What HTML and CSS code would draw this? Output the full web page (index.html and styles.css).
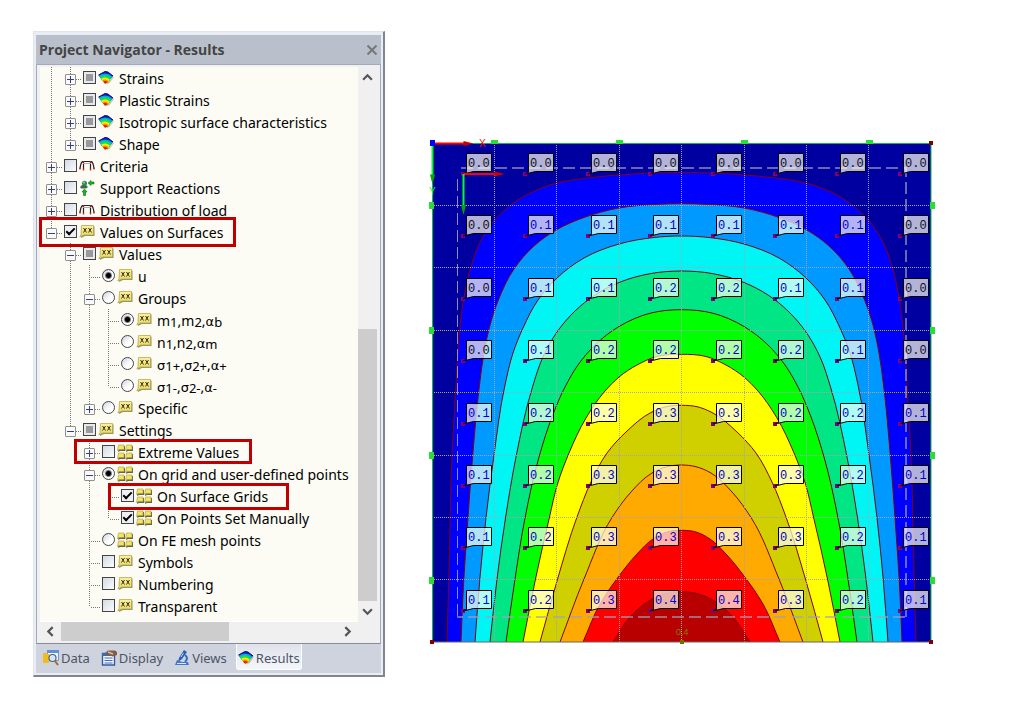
FILE: index.html
```html
<!DOCTYPE html>
<html lang="en">
<head>
<meta charset="utf-8">
<title>Project Navigator - Results</title>
<link rel="stylesheet" href="styles.css">
</head>
<body>
<svg class="sprite" aria-hidden="true">
  <defs>
    <clipPath id="fan"><path d="M.5 5 7 1.500 10 2 15 6 12.500 8.500 10.500 12 7 13.500 4 10Z"/></clipPath>
    <linearGradient id="note" x1="0" y1="0" x2="0" y2="1"><stop offset="0" stop-color="#fdf0a0"/><stop offset="1" stop-color="#e3d660"/></linearGradient>
  </defs>
  <symbol id="i-surface" viewBox="0 0 16 16">
    <path d="M2 6.500 9 14.500 12 12.500 16 7 11 3Z" fill="#777" opacity=".4"/>
    <g clip-path="url(#fan)">
      <rect width="16" height="16" fill="#1018c8"/>
      <circle cx="7" cy="14" r="10.500" fill="#08a0f0"/>
      <circle cx="7" cy="14" r="9" fill="#10e050"/>
      <circle cx="7" cy="14" r="6.500" fill="#f6f000"/>
      <circle cx="7" cy="14" r="4.500" fill="#ff9000"/>
      <circle cx="7" cy="14" r="3" fill="#f01010"/>
    </g>
    <path d="M.5 5 7 1.500 10 2 15 6" fill="none" stroke="#101070"/>
  </symbol>
  <symbol id="i-load" viewBox="0 0 16 16">
    <path d="M1 11Q1.500 5 3.500 3.500H12.500Q14.500 5 15 11" fill="none" stroke="#222" stroke-width="1.200"/>
    <path d="M4.500 12V4M11.500 12V4" fill="none" stroke="#222" stroke-width="1.200"/>
    <path d="M4 5.500H12" stroke="#aaa"/>
    <path d="M1 11.500V9.500M15 11.500V9.500M3 4.500 5 3.500M13 4.500 11 3.500M4.500 12.500V10.500M11.500 12.500V10.500" stroke="#d82020" fill="none" stroke-width="1.300"/>
  </symbol>
  <symbol id="i-support" viewBox="0 0 16 16">
    <path d="M1 7 3 5H7L9 7 7 8.500H2Z" fill="#3c6c50"/>
    <circle cx="5.500" cy="3.200" r="2.500" fill="#2e8a55"/><circle cx="5" cy="2.500" r=".9" fill="#98d8b0"/>
    <path d="M9 3 12 .5V2H15V4H12V5.500ZM5.500 9 8 12H6.500V15.500H4.500V12H3Z" fill="#10b818" stroke="#166a20" stroke-width=".6"/>
  </symbol>
  <symbol id="i-note" viewBox="0 0 16 16">
    <path d="M3 2.500H15.500V12H6L2 14Z" fill="#77775c" opacity=".8"/>
    <path d="M2.500 1.500H14.500V11H5L.8 13 2 10.500Z" fill="url(#note)" stroke="#b2a040" stroke-width=".7"/>
    <path d="M4.500 4 7.500 8.500M7.500 4 4.500 8.500M9.500 4 12.500 8.500M12.500 4 9.500 8.500" stroke="#343010" stroke-width="1"/>
  </symbol>
  <symbol id="i-grid" viewBox="0 0 16 16">
    <g fill="#66644e"><path d="M2 2H8V7H3L1 8ZM10 2H16V7H11L9 8ZM2 10H8V15H3L1 16ZM10 10H16V15H11L9 16Z"/></g>
    <g fill="#f3e467" stroke="#a99a38" stroke-width=".6"><path d="M1.500 1H7V5.500H2L.5 6.500ZM9.500 1H15V5.500H10L8.500 6.500ZM1.500 9H7V13.500H2L.5 14.500ZM9.500 9H15V13.500H10L8.500 14.500Z"/></g>
  </symbol>
  <symbol id="i-data" viewBox="0 0 16 16">
    <path d="M4.500 .5H15.500V10.500H4.500Z" fill="#eef4fc" stroke="#6c94d4"/><path d="M4 0H16V3H4Z" fill="#5f90dc"/>
    <path d="M0 3H4L5 4H6V13H0Z" fill="#f0bd20"/>
    <circle cx="9.500" cy="8" r="3.500" fill="#d2e8fa" stroke="#50627a" stroke-width="1.200"/>
    <path d="M12 11 15 15" stroke="#a66c24" stroke-width="2"/>
  </symbol>
  <symbol id="i-display" viewBox="0 0 16 16">
    <path d="M1.500 3.500H13.500V15H1.500Z" fill="#f2f6fd" stroke="#33599d" stroke-width="1.400"/><path d="M1 3H9V6H1Z" fill="#3969b8"/>
    <path d="M3.500 8H11.500M3.500 10.500H11.500M3.500 13H11.500" stroke="#3e6dbd"/>
    <path d="M4 3 7 .5H14L16 2V5L12 6.500 6 5Z" fill="#7d5d48"/><path d="M7 2 12 4" stroke="#e1b990" stroke-width="1.500"/>
  </symbol>
  <symbol id="i-views" viewBox="0 0 16 16">
    <path d="M10 0 13 2 8 9 4 12 5 8Z" fill="#2860b8"/><path d="M11 5Q15 8 11 12" fill="none" stroke="#3269b8" stroke-width="2"/>
    <path d="M3 10 8 12H14L15 15H1Z" fill="#4477c8"/><path d="M3 13.500H12" stroke="#dce8fa"/><path d="M9.500 3 7 7" stroke="#b9d2f5"/>
  </symbol>
</svg>

<main class="workspace">
  <section class="panel" aria-label="Project Navigator">
    <header class="panel-title">
      <h1>Project Navigator - Results</h1>
      <button class="close" aria-label="Close"><svg viewBox="0 0 10 10"><path d="M.5 .5 9.500 9.500M9.500 .5 .5 9.500"/></svg></button>
    </header>
    <div class="view">
      <div class="tree-pane">
        <ul class="tree">
          <li>
            <ul>
              <li><div class="row"><button class="exp plus" aria-label="Expand"></button><input type="checkbox" class="mixed" id="c1"><svg><use href="#i-surface"/></svg><label for="c1">Strains</label></div></li>
              <li><div class="row"><button class="exp plus" aria-label="Expand"></button><input type="checkbox" class="mixed" id="c2"><svg><use href="#i-surface"/></svg><label for="c2">Plastic Strains</label></div></li>
              <li><div class="row"><button class="exp plus" aria-label="Expand"></button><input type="checkbox" class="mixed" id="c3"><svg><use href="#i-surface"/></svg><label for="c3">Isotropic surface characteristics</label></div></li>
              <li><div class="row"><button class="exp plus" aria-label="Expand"></button><input type="checkbox" class="mixed" id="c4"><svg><use href="#i-surface"/></svg><label for="c4">Shape</label></div></li>
            </ul>
          </li>
          <li><div class="row"><button class="exp plus" aria-label="Expand"></button><input type="checkbox" id="c5"><svg><use href="#i-load"/></svg><label for="c5">Criteria</label></div></li>
          <li><div class="row"><button class="exp plus" aria-label="Expand"></button><input type="checkbox" id="c6"><svg><use href="#i-support"/></svg><label for="c6">Support Reactions</label></div></li>
          <li><div class="row"><button class="exp plus" aria-label="Expand"></button><input type="checkbox" id="c7"><svg><use href="#i-load"/></svg><label for="c7">Distribution of load</label></div></li>
          <li><div class="row mark mark-values"><button class="exp" aria-label="Collapse"></button><input type="checkbox" id="c8" checked><svg><use href="#i-note"/></svg><label for="c8">Values on Surfaces</label></div>
            <ul>
              <li><div class="row"><button class="exp" aria-label="Collapse"></button><input type="checkbox" class="mixed" id="c9"><svg><use href="#i-note"/></svg><label for="c9">Values</label></div>
                <ul>
                  <li><div class="row leaf"><input type="radio" name="value" id="r1" checked><svg><use href="#i-note"/></svg><label for="r1">u</label></div></li>
                  <li><div class="row"><button class="exp" aria-label="Collapse"></button><input type="radio" name="value" id="r2"><svg><use href="#i-note"/></svg><label for="r2">Groups</label></div>
                    <ul>
                      <li><div class="row leaf"><input type="radio" name="group" id="g1" checked><svg><use href="#i-note"/></svg><label for="g1">m<span class="low">1</span>,m<span class="low">2</span>,<span class="greek">α</span><span class="low">b</span></label></div></li>
                      <li><div class="row leaf"><input type="radio" name="group" id="g2"><svg><use href="#i-note"/></svg><label for="g2">n<span class="low">1</span>,n<span class="low">2</span>,<span class="greek">α</span><span class="low">m</span></label></div></li>
                      <li><div class="row leaf"><input type="radio" name="group" id="g3"><svg><use href="#i-note"/></svg><label for="g3"><span class="greek">σ</span><span class="low">1+</span>,<span class="greek">σ</span><span class="low">2+</span>,<span class="greek">α</span><span class="low">+</span></label></div></li>
                      <li><div class="row leaf"><input type="radio" name="group" id="g4"><svg><use href="#i-note"/></svg><label for="g4"><span class="greek">σ</span><span class="low">1-</span>,<span class="greek">σ</span><span class="low">2-</span>,<span class="greek">α</span><span class="low">-</span></label></div></li>
                    </ul>
                  </li>
                  <li><div class="row"><button class="exp plus" aria-label="Expand"></button><input type="radio" name="value" id="r3"><svg><use href="#i-note"/></svg><label for="r3">Specific</label></div></li>
                </ul>
              </li>
              <li><div class="row"><button class="exp" aria-label="Collapse"></button><input type="checkbox" class="mixed" id="c10"><svg><use href="#i-note"/></svg><label for="c10">Settings</label></div>
                <ul>
                  <li><div class="row mark mark-extreme"><button class="exp plus" aria-label="Expand"></button><input type="checkbox" id="c11"><svg><use href="#i-grid"/></svg><label for="c11">Extreme Values</label></div></li>
                  <li><div class="row"><button class="exp" aria-label="Collapse"></button><input type="radio" name="points" id="p1" checked><svg><use href="#i-grid"/></svg><label for="p1">On grid and user-defined points</label></div>
                    <ul>
                      <li><div class="row leaf mark mark-grids"><input type="checkbox" id="c12" checked><svg><use href="#i-grid"/></svg><label for="c12">On Surface Grids</label></div></li>
                      <li><div class="row leaf"><input type="checkbox" id="c13" checked><svg><use href="#i-grid"/></svg><label for="c13">On Points Set Manually</label></div></li>
                    </ul>
                  </li>
                  <li><div class="row leaf"><input type="radio" name="points" id="p2"><svg><use href="#i-grid"/></svg><label for="p2">On FE mesh points</label></div></li>
                  <li><div class="row leaf"><input type="checkbox" id="c14"><svg><use href="#i-note"/></svg><label for="c14">Symbols</label></div></li>
                  <li><div class="row leaf"><input type="checkbox" id="c15"><svg><use href="#i-note"/></svg><label for="c15">Numbering</label></div></li>
                  <li><div class="row leaf"><input type="checkbox" id="c16"><svg><use href="#i-note"/></svg><label for="c16">Transparent</label></div></li>
                </ul>
              </li>
            </ul>
          </li>
        </ul>
      </div>
      <div class="vbar">
        <button class="arrow" aria-label="Scroll up"><svg viewBox="0 0 10 10"><path d="M1 7 5 3 9 7"/></svg></button>
        <div class="track"><div class="thumb"></div></div>
        <button class="arrow" aria-label="Scroll down"><svg viewBox="0 0 10 10"><path d="M1 3 5 7 9 3"/></svg></button>
      </div>
      <div class="hbar">
        <button class="arrow" aria-label="Scroll left"><svg viewBox="0 0 10 10"><path d="M7 1 3 5 7 9"/></svg></button>
        <div class="track"><div class="thumb"></div></div>
        <button class="arrow" aria-label="Scroll right"><svg viewBox="0 0 10 10"><path d="M3 1 7 5 3 9"/></svg></button>
      </div>
    </div>
    <nav class="tabs">
      <button><svg><use href="#i-data"/></svg>Data</button>
      <button><svg><use href="#i-display"/></svg>Display</button>
      <button><svg><use href="#i-views"/></svg>Views</button>
      <button class="active"><svg><use href="#i-surface"/></svg>Results</button>
    </nav>
  </section>
  <svg class="plot" id="plot" viewBox="424 132 520 520" role="img" aria-label="Surface deformation contour plot"></svg>
</main>
<script src="plot.js"></script>
</body>
</html>
```
FILE: plot.js
```js
const NS = "http://www.w3.org/2000/svg";
const plot = document.getElementById("plot");
const LEFT = 432, RIGHT = 931, TOP = 143, BOTTOM = 642, MID = 681.5;

function add(tag, attrs, text) {
  const el = document.createElementNS(NS, tag);
  for (const k in attrs) el.setAttribute(k, attrs[k]);
  if (text) el.textContent = text;
  plot.appendChild(el);
}

// Left half of every isoline, from the bottom edge up to the axis of symmetry.
const isolines = [
  ["#0000ff", [[447,642],[449,572],[452,455],[456,385],[459,337],[463.5,300],[472,263],[482,238],[495,219.5],[511,205],[530,193],[557,183],[590,177.7],[624,174.5],[651,173],[681.5,172.5]]],
  ["#0099ff", [[461,642],[463.5,585],[467.5,525],[473,452],[479.5,385],[484,353],[489.5,327],[498,301],[514,269],[534,246],[557,229.5],[584,217.5],[619,208],[654,204.5],[681.5,203.7]]],
  ["#00f5f5", [[475,642],[480,577],[486,518],[494,455],[505,385],[513,353],[523,328],[538,300],[557,278],[584,258],[619,244],[654,237.5],[681.5,236]]],
  ["#00e685", [[490,642],[497,579],[505.5,518],[516,457],[532.5,387],[542.5,358],[557,332],[575,311],[595,295],[619,282.5],[651,273.5],[681.5,271]]],
  ["#00ff00", [[506,642],[515,579],[525,518],[539,457],[552,417],[565,387],[578,365],[595,345],[619,326.5],[651,313],[681.5,309.7]]],
  ["#ffff00", [[523,642],[535.5,579],[549.5,517],[557.5,484],[569,453],[586,418],[605,391],[619,377],[637,365],[657,356.5],[681.5,354.3]]],
  ["#d0d000", [[540,642],[557,581],[577,517],[591,482],[607,453],[626,432],[651,412.5],[666,406.7],[681.5,405.3]]],
  ["#ffaa00", [[560,642],[584,579],[612,517.5],[631,492],[652,473],[667,466.7],[681.5,465]]],
  ["#ff0000", [[583,642],[600,604],[619,576],[637,554],[653,539],[667,532],[681.5,530.3]]],
  ["#b90000", [[613,642],[630,617],[652,599],[667,593.3],[681.5,591.7]]]
];

const dist = (a, b) => Math.hypot(a[0] - b[0], a[1] - b[1]);

// Chord-length weighted tangent, so unevenly spaced points stay smooth.
function tangent(a, b, c) {
  if (!a || !c) return [0, 1].map(i => ((c || b)[i] - (a || b)[i]) / dist(c || b, a || b));
  const u = dist(a, b), v = dist(b, c);
  return [0, 1].map(i => ((b[i] - a[i]) / u * v + (c[i] - b[i]) / v * u) / (u + v));
}

function smooth(half) {
  const mirrored = half.slice(0, -1).reverse().map(([x, y]) => [2 * MID - x, y]);
  const p = half.concat(mirrored);
  let d = "M" + p[0];
  for (let i = 0; i < p.length - 1; i++) {
    const b = p[i], c = p[i + 1], s = dist(b, c) / 3;
    const t = tangent(p[i - 1], b, c), w = tangent(b, c, p[i + 2]);
    d += "C" + [b[0] + t[0] * s, b[1] + t[1] * s, c[0] - w[0] * s, c[1] - w[1] * s, c[0], c[1]].join(" ");
  }
  return d;
}

add("rect", { x: LEFT, y: TOP, width: RIGHT - LEFT, height: BOTTOM - TOP, fill: "#0000a0" });
for (const [fill, half] of isolines) add("path", { d: smooth(half), fill, class: "isoline" });

for (let i = 1; i < 8; i++) {
  const x = Math.floor(LEFT + i * 62.4) + 0.5, y = Math.floor(TOP + i * 62.4) + 0.5;
  add("path", { d: `M${x} ${TOP}V${BOTTOM}M${LEFT} ${y}H${RIGHT}`, class: "grid" });
}
add("path", { d: "M461 168H906V617", class: "bounds" });
add("path", { d: "M905 617H457", class: "bounds" });
add("path", { d: "M457.500 179V617", class: "bounds thin" });

add("path", { d: `M${LEFT} ${BOTTOM}H${RIGHT}`, stroke: "#666", fill: "none" });
add("path", { d: `M${LEFT + .5} ${BOTTOM}V${TOP + .5}H${RIGHT}V${BOTTOM}`, class: "edge" });
for (const i of [1, 3, 5, 7]) {
  const s = Math.round(i * 62.4);
  for (const [x, y] of [[LEFT + s - 3, TOP - 3], [LEFT - 3, TOP + s - 3], [RIGHT - 1, TOP + s - 3]])
    add("rect", { x, y, width: y < TOP ? 7 : 5, height: y < TOP ? 4 : 7, class: "support" });
}
for (const [x, y, fill] of [[RIGHT, TOP, "#800000"], [LEFT, BOTTOM, "#800000"], [RIGHT, BOTTOM, "#800000"], [682, BOTTOM, "#707000"]])
  add("rect", { x: x - 2, y: y - 2, width: 4, height: 4, fill });

const values = [
  "0.0 0.0 0.0 0.0 0.0 0.0 0.0 0.0", "0.0 0.1 0.1 0.1 0.1 0.1 0.1 0.0",
  "0.0 0.1 0.1 0.2 0.2 0.1 0.1 0.0", "0.0 0.1 0.2 0.2 0.2 0.2 0.1 0.0",
  "0.1 0.2 0.2 0.3 0.3 0.2 0.2 0.1", "0.1 0.2 0.3 0.3 0.3 0.3 0.2 0.1",
  "0.1 0.2 0.3 0.3 0.3 0.3 0.2 0.1", "0.1 0.2 0.3 0.4 0.4 0.3 0.2 0.1"
];
values.forEach((line, r) => line.split(" ").forEach((v, c) => {
  const x = Math.round(463 + c * 62.4), y = Math.round(174 + r * 62.4);
  add("rect", { x: x - 2, y: y - 2, width: 4, height: 4, fill: "#800080" });
  add("path", { d: `M${x + 3.5} ${y - 20.5}h25v18h-18l-8 2l1 -2z`, class: "tag" });
  add("path", { d: `M${x} ${y}L${x + 4} ${y - 2}`, stroke: "#000", fill: "none" });
  add("text", { x: x + 5, y: y - 7, class: v === "0.0" ? "value zero" : "value" }, v);
}));

function axes(x, y) {
  add("path", { d: `M${x} ${y}H${x + 32}`, stroke: "#ff0000", "stroke-width": 2 });
  add("path", { d: `M${x + 31} ${y - 2.5}L${x + 41} ${y}L${x + 31} ${y + 2.5}Z`, fill: "#c80000" });
  add("path", { d: `M${x} ${y}V${y + 32}`, stroke: "#00ff20", "stroke-width": 2 });
  add("path", { d: `M${x - 2.5} ${y + 31}L${x} ${y + 41}L${x + 2.5} ${y + 31}Z`, fill: "#00a800" });
}
axes(LEFT + .5, TOP + .5);
axes(463.5, 174);
add("rect", { x: LEFT - 2, y: TOP - 3, width: 5, height: 6, fill: "#0000ff" });
add("text", { x: 479, y: 147, class: "axis", fill: "#ff0000" }, "X");
add("text", { x: 429, y: 195, class: "axis", fill: "#00ff20" }, "Y");
add("text", { x: 676, y: 635, class: "peak" }, "0.4");
```
FILE: styles.css
```css
*, ::before, ::after { box-sizing: border-box; }

body {
  margin: 0;
  background: #fff;
  font: 14px/22px "Noto Sans", "Open Sans", sans-serif;
  color: #000;
}

button {
  border: 0;
  padding: 0;
  background: none;
  font: inherit;
  color: inherit;
}

ul { list-style: none; margin: 0; padding: 0; }

.sprite { position: absolute; width: 0; height: 0; }

.workspace {
  display: flex;
  align-items: flex-start;
  gap: 39px;
  padding: 31px 84px 31px 33px;
}

/* Navigator panel */
.panel {
  flex: 0 0 352px;
  padding: 3px 2px 2px;
  background: #e8edf6;
  border: 1px solid #e0e4ec;
  border-right: 2px solid #808590;
  border-bottom: 2px solid #808590;
}

.panel-title {
  display: flex;
  align-items: center;
  justify-content: space-between;
  height: 30px;
  padding: 0 4px 0 3px;
  background: #b9c0cb;
  border-bottom: 1px solid #a3a9b9;
}
.panel-title h1 { margin: 0; font-family: "Open Sans", "Noto Sans", sans-serif; font-size: 14px; font-weight: 700; color: #444; }
.close { display: flex; }
.close svg { width: 10px; height: 10px; fill: none; stroke: #777; stroke-width: 2; }

.view {
  display: grid;
  grid-template-columns: 1fr 19px;
  padding: 2px 3px 2px 3px;
  background: #f0f0f0;
  border-left: 1px solid #a3a9b9;
  border-right: 1px solid #a3a9b9;
  border-bottom: 1px solid #878b95;
}
.tree-pane {
  min-width: 0;
  padding: 0 0 4px 6px;
  background: #fcfcf4;
  border-bottom: 1px solid #fff;
}

/* Tree */
.tree ul { margin-left: 19px; }
.tree li {
  background: repeating-linear-gradient(#777 0 1px, transparent 1px 2px) 5px 0 / 1px 100% no-repeat;
}
.tree li:last-child { background-size: 1px 12px; }

.row {
  display: flex;
  align-items: center;
  height: 22px;
  position: relative;
  white-space: nowrap;
  background: repeating-linear-gradient(90deg, #777 0 1px, transparent 1px 2px) 7px 12px / 9px 1px no-repeat;
}
.row.leaf { padding-left: 18px; }
.row svg { width: 16px; height: 16px; margin: 0 4px 0 2px; flex: none; }
.row label { padding: 2px 0 0 1px; }
.low { font-size: 13px; position: relative; top: 1px; }
.greek { font-family: "DejaVu Sans", sans-serif; font-size: 13px; line-height: 1; }

.exp {
  width: 11px;
  height: 11px;
  flex: none;
  margin: 3px 7px 0 0;
  border: 1px solid #909090;
  border-radius: 1px;
  background: linear-gradient(#30408c, #30408c) center / 7px 1px no-repeat, #fafafa;
}
.exp.plus {
  background: linear-gradient(#30408c, #30408c) center / 7px 1px no-repeat,
    linear-gradient(#30408c, #30408c) center / 1px 7px no-repeat, #fafafa;
}

input {
  appearance: none;
  width: 13px;
  height: 13px;
  flex: none;
  margin: 0 0 2px;
  border: 1px solid #444;
  background: linear-gradient(135deg, #d4dae4, #fafbfd);
}
input.mixed { background: linear-gradient(#999, #999) center / 7px 7px no-repeat, #e6e9ef; }
input[type="checkbox"]:checked {
  background: #eef0f5;
  display: grid;
  place-items: center;
}
input[type="checkbox"]:checked::before {
  content: "";
  width: 9px;
  height: 5px;
  margin-bottom: 2px;
  border: solid #000;
  border-width: 0 0 2px 2px;
  rotate: -45deg;
}
input[type="radio"] { border-radius: 50%; background: linear-gradient(135deg, #ccd3de, #fff 60%); }
input[type="radio"]:checked { background: radial-gradient(circle, #000 0 2px, #0000 4px), linear-gradient(135deg, #ccd3de, #fff 60%); }

.mark::after {
  content: "";
  position: absolute;
  border: 3px solid #c00000;
  pointer-events: none;
}
.mark-values::after { left: -7px; top: -4px; bottom: -4px; width: 197px; }
.mark-extreme::after { left: -10px; top: -2px; bottom: -1px; width: 178px; }
.mark-grids::after { left: 5px; top: -2px; bottom: -3px; width: 181px; }

/* Scroll bars */
.vbar { display: flex; flex-direction: column; }
.hbar { grid-column: 1; display: flex; height: 19px; }
.track { flex: 1; display: flex; }
.vbar .track { flex-direction: column; justify-content: flex-end; }
.thumb { background: #cdcdcd; }
.vbar .thumb { height: 53%; }
.hbar .thumb { width: 61%; }
.arrow { display: flex; align-items: center; justify-content: center; width: 21px; height: 21px; }
.vbar .arrow { width: 19px; }
.hbar .arrow { height: 19px; }
.arrow svg { width: 11px; height: 11px; fill: none; stroke: #555; stroke-width: 2; }

/* Tabs */
.tabs {
  display: flex;
  gap: 7px;
  height: 29px;
  padding: 0 5px;
  background: #cfd3dd;
  color: #4c5568;
  font-size: 13px;
}
.tabs button { display: flex; align-items: center; gap: 2px; height: 26px; padding: 2px 2px 0; }
.tabs svg { width: 16px; height: 16px; }
.tabs .active {
  padding: 2px 1px 0;
  background: linear-gradient(#dfe2ea, #f4f6f9);
  border: 1px solid #f8ffff;
  border-top: 0;
  border-radius: 0 0 3px 3px;
}

/* Contour plot */
.plot { flex: 1; min-width: 0; margin-top: 101px; }
.isoline { stroke: #800010; stroke-width: 1; }
.grid { fill: none; stroke: #a4a4b4; stroke-width: 1; stroke-dasharray: 1 1; }
.bounds { fill: none; stroke: #a0a0b8; stroke-width: 2; stroke-opacity: .65; stroke-dasharray: 12 5; }
.thin { stroke-width: 1; stroke-opacity: .9; }
.edge { fill: none; stroke: #10b848; }
.support { fill: #28dd38; }
.tag { fill: rgb(255 255 241 / .7); stroke: #000; }
.value { font: 12px "Liberation Mono", monospace; fill: #0000c8; }
.zero { fill: #101018; }
.axis { font: 10px "Liberation Sans", sans-serif; }
.peak { font: 9px "Liberation Sans", sans-serif; fill: #808000; }
```
